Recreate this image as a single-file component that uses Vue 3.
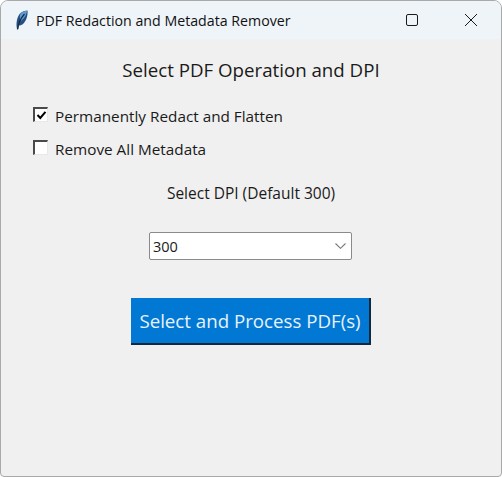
<template>
  <div class="window">
    <header class="titlebar">
      <svg class="app-icon" width="14" height="20" viewBox="0 0 14 20">
        <path d="M2 19 C1 14 1.500 8 5 3.500 C7 1.500 10 0.500 12.500 0.500 C13 5 11.500 10.500 8.500 13.500 C7 15 5.500 15.500 4 15.500 L3.300 19 Z" fill="#234f86" />
        <path d="M5.500 3.500 C7.500 1.500 10 1 12 1 C11.500 5 9.500 8 6 11 C4.500 9 4.500 6 5.500 3.500 Z" fill="#5f9bd4" />
        <path d="M2.500 19.500 C3 14 5.500 8.500 9.500 4" fill="none" stroke="#1c2a3a" stroke-width="1.200" />
      </svg>
      <span class="title">PDF Redaction and Metadata Remover</span>
      <div class="controls">
        <svg width="12" height="12" viewBox="0 0 12 12">
          <rect x="0.500" y="0.500" width="11" height="11" rx="1.500" fill="none" stroke="#1a1a1a" stroke-width="1" />
        </svg>
        <svg width="14" height="14" viewBox="0 0 14 14">
          <path d="M1 1 L13 13 M13 1 L1 13" stroke="#1a1a1a" stroke-width="1" fill="none" />
        </svg>
      </div>
    </header>

    <main class="body">
      <h1 class="heading">Select PDF Operation and DPI</h1>

      <div class="options">
        <label v-for="opt in options" :key="opt.label" class="option">
          <span class="box">
            <svg v-if="opt.checked" width="11" height="11" viewBox="0 0 11 11">
              <path d="M1.500 5 L4.300 8 L9.500 1.800" fill="none" stroke="#000" stroke-width="2" />
            </svg>
          </span>
          <span>{{ opt.label }}</span>
        </label>
      </div>

      <div class="dpi-label">Select DPI (Default 300)</div>

      <div class="combo">
        <span>300</span>
        <svg width="11" height="6" viewBox="0 0 11 6">
          <path d="M0.500 0.500 L5.500 5.300 L10.500 0.500" fill="none" stroke="#7a7a7a" stroke-width="1.100" />
        </svg>
      </div>

      <button class="process">Select and Process PDF(s)</button>
    </main>
  </div>
</template>

<script setup>
const options = [
  { label: 'Permanently Redact and Flatten', checked: true },
  { label: 'Remove All Metadata', checked: false },
]
</script>

<style>
html, body {
  margin: 0;
  background: #fff;
}
</style>

<style scoped>
.window {
  width: 502px;
  height: 477px;
  box-sizing: border-box;
  display: flex;
  flex-direction: column;
  border: 1px solid #a9a9a9;
  border-radius: 8px 8px 4px 4px;
  background: #f0f0f0;
  overflow: hidden;
  font-family: "Open Sans", "Noto Sans", sans-serif;
  color: #1a1a1a;
}

.titlebar {
  height: 38px;
  flex: none;
  display: flex;
  align-items: center;
  background: #eff4f9;
  padding-left: 14px;
}

.app-icon {
  flex: none;
}

.title {
  margin-left: 7px;
  font-size: 14.200px;
  color: #111;
  white-space: nowrap;
}

.controls {
  margin-left: auto;
  display: flex;
  align-items: center;
  gap: 46px;
  padding-right: 23px;
}

.body {
  flex: 1;
  display: flex;
  flex-direction: column;
  align-items: center;
}

.heading {
  margin: 19px 0 0;
  font-size: 18.700px;
  font-weight: 400;
  line-height: 24px;
}

.options {
  align-self: flex-start;
  display: flex;
  flex-direction: column;
  gap: 12px;
  margin: 24px 0 0 32px;
}

.option {
  display: flex;
  align-items: center;
  gap: 7px;
  font-size: 15.300px;
  line-height: 21px;
}

.box {
  width: 15px;
  height: 15px;
  box-sizing: border-box;
  display: flex;
  align-items: center;
  justify-content: center;
  border-style: solid;
  border-width: 2px 1px 1px 2px;
  border-color: #4a4a4a #e8e8e8 #e8e8e8 #4a4a4a;
  background: #fff;
  margin-top: -4px;
}

.dpi-label {
  margin-top: 23px;
  font-size: 15.500px;
  line-height: 20px;
}

.combo {
  width: 203px;
  height: 28px;
  box-sizing: border-box;
  margin: 29px 1px 0 0;
  padding: 0 5px 0 3px;
  display: flex;
  align-items: center;
  justify-content: space-between;
  background: #fff;
  border: 1px solid #8a8a8a;
  border-radius: 2px;
  font-size: 14.500px;
}

.process {
  width: 240px;
  height: 47px;
  margin-top: 38px;
  padding: 0;
  box-sizing: border-box;
  background: #0078d4;
  color: #e8f2fb;
  border: none;
  border-right: 2px solid #10293f;
  border-bottom: 2px solid #10293f;
  font-family: inherit;
  font-size: 18.700px;
}
</style>
